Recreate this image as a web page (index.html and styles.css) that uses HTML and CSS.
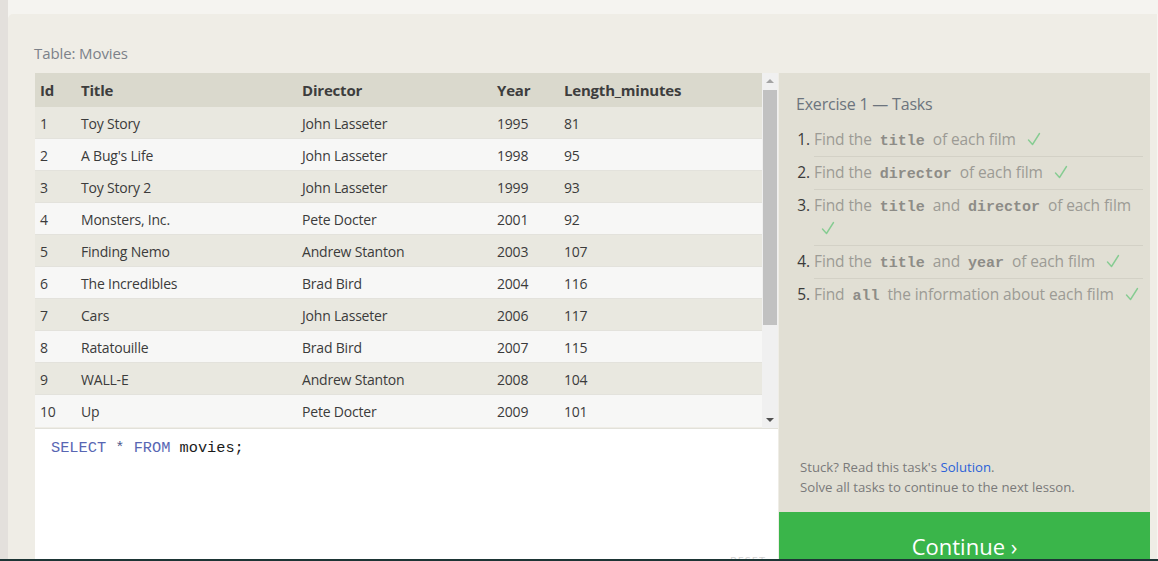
FILE: index.html
```html
<!DOCTYPE html>
<html lang="en">
<head>
<meta charset="utf-8">
<title>SQL Lesson 1</title>
<link rel="stylesheet" href="styles.css">
</head>
<body>
<div class="page">
  <div class="rail"></div>
  <div class="main">
    <div class="topband"></div>
    <div class="content">
      <div class="table-label">Table: Movies</div>
      <div class="workspace">
        <div class="left">
          <div class="results">
            <div class="table-wrap">
              <table class="data">
                <colgroup>
                  <col class="c-id"><col class="c-title"><col class="c-dir"><col class="c-year"><col class="c-len">
                </colgroup>
                <thead>
                  <tr><th>Id</th><th>Title</th><th>Director</th><th>Year</th><th>Length_minutes</th></tr>
                </thead>
                <tbody>
                  <tr><td>1</td><td>Toy Story</td><td>John Lasseter</td><td>1995</td><td>81</td></tr>
                  <tr><td>2</td><td>A Bug's Life</td><td>John Lasseter</td><td>1998</td><td>95</td></tr>
                  <tr><td>3</td><td>Toy Story 2</td><td>John Lasseter</td><td>1999</td><td>93</td></tr>
                  <tr><td>4</td><td>Monsters, Inc.</td><td>Pete Docter</td><td>2001</td><td>92</td></tr>
                  <tr><td>5</td><td>Finding Nemo</td><td>Andrew Stanton</td><td>2003</td><td>107</td></tr>
                  <tr><td>6</td><td>The Incredibles</td><td>Brad Bird</td><td>2004</td><td>116</td></tr>
                  <tr><td>7</td><td>Cars</td><td>John Lasseter</td><td>2006</td><td>117</td></tr>
                  <tr><td>8</td><td>Ratatouille</td><td>Brad Bird</td><td>2007</td><td>115</td></tr>
                  <tr><td>9</td><td>WALL-E</td><td>Andrew Stanton</td><td>2008</td><td>104</td></tr>
                  <tr><td>10</td><td>Up</td><td>Pete Docter</td><td>2009</td><td>101</td></tr>
                </tbody>
              </table>
            </div>
            <div class="scrollbar">
              <div class="arrow up"></div>
              <div class="track"><div class="thumb"></div></div>
              <div class="arrow down"></div>
            </div>
          </div>
          <div class="editor">
            <div class="code"><span class="kw">SELECT</span> <span class="op">*</span> <span class="kw">FROM</span> movies;</div>
            <div class="reset">RESET</div>
          </div>
        </div>
        <div class="panel">
          <div class="panel-body">
            <h2 class="panel-title">Exercise 1 — Tasks</h2>
            <ol class="tasks">
              <li>Find the <code>title</code> of each film <svg class="check" viewBox="0 0 14 14" width="14" height="14"><polyline points="1.5,8 5.5,12.5 12.5,1.5"/></svg></li>
              <li>Find the <code>director</code> of each film <svg class="check" viewBox="0 0 14 14" width="14" height="14"><polyline points="1.5,8 5.5,12.5 12.5,1.5"/></svg></li>
              <li>Find the <code>title</code> and <code>director</code> of each film <svg class="check" viewBox="0 0 14 14" width="14" height="14"><polyline points="1.5,8 5.5,12.5 12.5,1.5"/></svg></li>
              <li>Find the <code>title</code> and <code>year</code> of each film <svg class="check" viewBox="0 0 14 14" width="14" height="14"><polyline points="1.5,8 5.5,12.5 12.5,1.5"/></svg></li>
              <li>Find <code>all</code> the information about each film <svg class="check" viewBox="0 0 14 14" width="14" height="14"><polyline points="1.5,8 5.5,12.5 12.5,1.5"/></svg></li>
            </ol>
            <div class="stuck">
              <p>Stuck? Read this task's <a href="#" class="link">Solution</a>.</p>
              <p>Solve all tasks to continue to the next lesson.</p>
            </div>
          </div>
          <a href="#" class="continue">Continue ›</a>
        </div>
      </div>
    </div>
  </div>
</div>
<div class="bottom-bar"></div>
</body>
</html>
```
FILE: styles.css
```css
html, body {
  margin: 0;
  padding: 0;
  height: 561px;
  overflow: hidden;
}
body {
  font-family: "Open Sans", "Noto Sans", sans-serif;
  background: #efede6;
  color: #3a3a3a;
}
.page {
  display: flex;
  height: 561px;
  overflow: hidden;
}
.rail {
  width: 8px;
  flex: none;
  background: #e3e0dc;
}
.main {
  flex: 1;
  display: flex;
  flex-direction: column;
  background: #f5f4f0;
  min-height: 0;
}
.topband {
  height: 14px;
  flex: none;
}
.content {
  flex: 1;
  min-height: 0;
  background: #efede6;
  border-top-left-radius: 5px;
  border-right: 1px solid #f7f6f2;
  padding: 30px 7px 0 26px;
}
.table-label {
  font-size: 15px;
  color: #7c8189;
  line-height: 19px;
  height: 29px;
  letter-spacing: -0.1px;
}
.workspace {
  display: flex;
  gap: 1px;
}
.left {
  width: 743px;
  flex: none;
  margin-left: 1px;
  display: flex;
  flex-direction: column;
}
.results {
  display: flex;
  height: 355px;
}
.table-wrap {
  flex: 1;
  overflow: hidden;
}
table.data {
  width: 727px;
  border-collapse: collapse;
  table-layout: fixed;
  font-size: 14px;
  letter-spacing: -0.2px;
}
.c-id { width: 41px; }
.c-title { width: 221px; }
.c-dir { width: 195px; }
.c-year { width: 67px; }
table.data th {
  background: #dad9cd;
  text-align: left;
  font-weight: 700;
  color: #3d3d3d;
  height: 34px;
  padding: 0 0 0 5px;
  font-size: 15px;
}
table.data td {
  height: 30px;
  padding: 1px 0 0 5px;
  border-bottom: 1px solid #e3e2dc;
  color: #3b3b3b;
  white-space: nowrap;
}
table.data tbody tr:nth-child(odd) td { background: #e9e8e0; }
table.data tbody tr:nth-child(even) td { background: #f7f7f6; }
table.data tbody tr:last-child td { border-bottom: none; height: 31px; }

.scrollbar {
  width: 16px;
  flex: none;
  background: #f0f0f0;
  display: flex;
  flex-direction: column;
}
.arrow {
  height: 17px;
  flex: none;
  position: relative;
}
.arrow::after {
  content: "";
  position: absolute;
  left: 4px;
  border-left: 4px solid transparent;
  border-right: 4px solid transparent;
}
.arrow.up::after {
  top: 6px;
  border-bottom: 4px solid #a3a3a3;
}
.arrow.down::after {
  top: 7px;
  border-top: 4px solid #505050;
}
.track {
  flex: 1;
}
.thumb {
  margin: 0 1px;
  height: 235px;
  background: #c1c1c1;
}
.editor {
  position: relative;
  flex: none;
  background: #ffffff;
  border-top: 1px solid #e2e1da;
  height: 140px;
}
.code {
  font-family: "Liberation Mono", "DejaVu Sans Mono", monospace;
  font-size: 15.3px;
  line-height: 20px;
  padding: 9px 0 0 16px;
  color: #1a1a1a;
}
.kw { color: #5866b3; }
.op { color: #505a8c; }
.reset {
  position: absolute;
  right: 12px;
  top: 124px;
  font-size: 11px;
  letter-spacing: 1px;
  color: #d2d2d2;
}

.panel {
  width: 371px;
  flex: none;
  display: flex;
  flex-direction: column;
  background: #e1dfd4;
}
.panel-body {
  height: 439px;
  flex: none;
  display: flex;
  flex-direction: column;
  padding: 0 7px 0 17px;
  box-sizing: border-box;
}
.panel-title {
  margin: 20px 0 0 0;
  font-size: 16px;
  font-weight: 400;
  line-height: 22px;
  color: #6c747d;
  letter-spacing: -0.2px;
}
.tasks {
  margin: 9px 0 0 0;
  padding: 0 0 0 18px;
  font-size: 15.5px;
  color: #9c9b95;
  letter-spacing: -0.1px;
}
.tasks li {
  line-height: 23px;
  padding: 4px 0 5px 0;
  border-top: 1px solid #d3d1c6;
}
.tasks li:first-child {
  border-top: none;
}
.tasks li::marker {
  color: #3a3a3a;
}
.tasks code {
  font-family: "Liberation Mono", "DejaVu Sans Mono", monospace;
  font-weight: 700;
  font-size: 15px;
  line-height: 1;
  color: #8d8c87;
  padding: 0 4px;
  letter-spacing: 0;
}
.check {
  margin-left: 7px;
  vertical-align: -1px;
  fill: none;
  stroke: #86cc92;
  stroke-width: 1.4;
  stroke-linecap: round;
  stroke-linejoin: round;
}
.stuck {
  margin-top: auto;
  padding: 0 0 15px 4px;
  font-size: 13.2px;
  line-height: 20px;
  color: #7a7a7a;
}
.stuck p { margin: 0; }
.link {
  color: #2c62d8;
  text-decoration: none;
}
.continue {
  display: block;
  background: #3ab54a;
  color: #ffffff;
  text-decoration: none;
  text-align: center;
  font-size: 22px;
  line-height: 28px;
  padding: 20px 0 20px 0;
  height: 40px;
}
.bottom-bar {
  position: fixed;
  left: 0;
  right: 0;
  bottom: 0;
  height: 2px;
  background: #1d3535;
}
```
